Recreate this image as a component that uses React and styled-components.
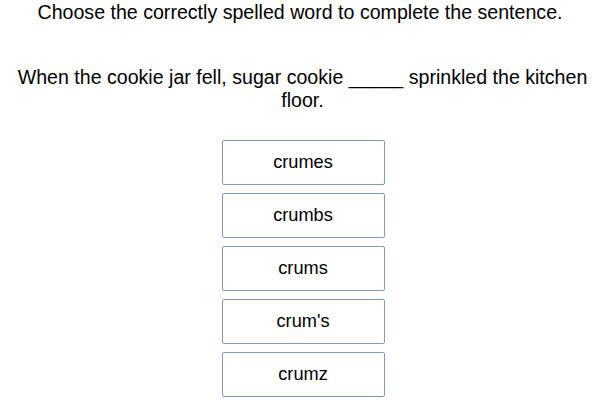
import React from 'react';
import styled, { createGlobalStyle } from 'styled-components';

const GlobalStyle = createGlobalStyle`
	html, body {
		margin: 0;
		padding: 0;
		background: #fff;
	}
	body {
		font-family: 'Liberation Sans', Arial, sans-serif;
		color: #000;
	}
`;

const Page = styled.div`
	width: 600px;
	height: 404px;
	display: flex;
	flex-direction: column;
	align-items: center;
	overflow: hidden;
`;

const Prompt = styled.div`
	margin-top: 1px;
	font-size: 19.6px;
	line-height: 22px;
	text-align: center;
	white-space: nowrap;
`;

const Sentence = styled.div`
	margin-top: 43px;
	margin-left: 5px;
	width: 590px;
	font-size: 19.6px;
	line-height: 23px;
	text-align: center;
`;

const Options = styled.div`
	margin-top: 28px;
	margin-left: 6px;
	display: flex;
	flex-direction: column;
	gap: 8px;
`;

const Option = styled.button`
	width: 163px;
	height: 45px;
	box-sizing: border-box;
	background: #fff;
	border: 1px solid #7f9db6;
	border-radius: 2px;
	font-family: 'Liberation Sans', Arial, sans-serif;
	font-size: 18.2px;
	color: #000;
	cursor: pointer;
	padding: 0 0 1px;
`;

const choices = ['crumes', 'crumbs', 'crums', "crum's", 'crumz'];

export default function App() {
	return (
		<Page>
			<GlobalStyle />
			<Prompt>Choose the correctly spelled word to complete the sentence.</Prompt>
			<Sentence>
				When the cookie jar fell, sugar cookie _____ sprinkled the kitchen floor.
			</Sentence>
			<Options>
				{choices.map((c) => (
					<Option key={c}>{c}</Option>
				))}
			</Options>
		</Page>
	);
}
